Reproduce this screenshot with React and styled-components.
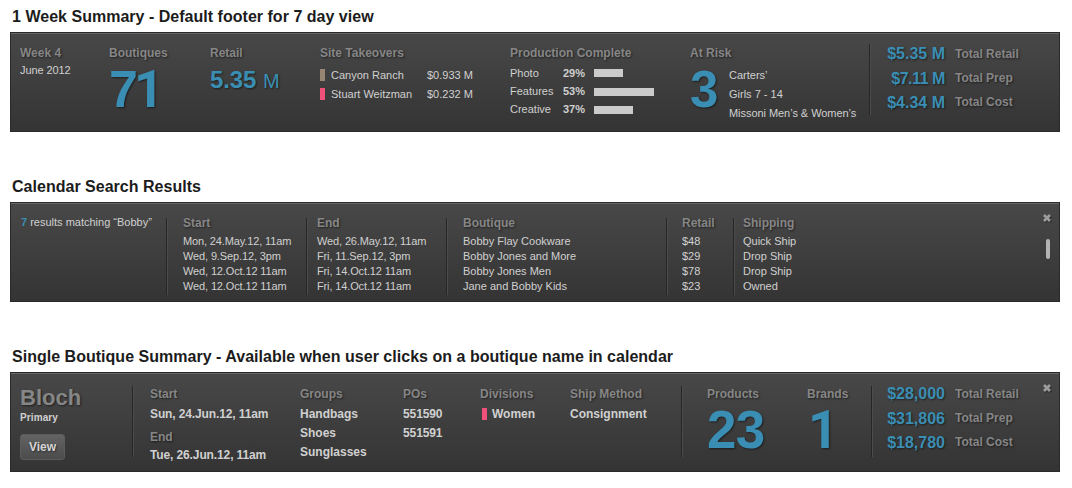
import React from 'react'
import styled, { createGlobalStyle, css } from 'styled-components';

const GlobalStyle = createGlobalStyle`
  body {
    margin: 0;
    background: #fff;
    font-family: "Liberation Sans", Arial, sans-serif;
  }
`

const blue = '#3a8eb3';
const shadow = css`text-shadow: 1px 1px 2px rgba(0, 0, 0, 0.5);`

const Page = styled.main`
  width: 1072px;
  height: 488px;
  overflow: hidden;
`

const Section = styled.section`
  height: 170px;
  padding: 0 12px 0 10px;
`

const Title = styled.h2`
  margin: 0;
  padding: 7px 0 5px 2px;
  font-size: 16px;
  line-height: 20px;
  letter-spacing: 0.02px;
  font-weight: bold;
  color: #1c1c1c;
  white-space: nowrap;
`

const Panel = styled.div`
  display: flex;
  align-items: flex-start;
  box-sizing: border-box;
  width: 1050px;
  height: 100px;
  padding-left: 9px;
  border: 1px solid #2b2929;
  background: linear-gradient(#484848, #343434);
  box-shadow: inset 0 1px 0 #666;
  white-space: nowrap;
`

const Column = styled.div`
  flex: none;
  width: ${p => p.$w}px;
  padding-top: ${p => p.$top ?? 12}px;
`

const Divider = styled.div`
  flex: none;
  width: 1px;
  height: ${p => p.$h || 71}px;
  margin: ${p => p.$top ?? 11}px ${p => p.$gap}px 0 0;
  background: #262626;
  box-shadow: 1px 0 0 #4c4c4c;
`

const Label = styled.div`
  font-size: 12px;
  line-height: 16px;
  font-weight: bold;
  color: #868686;
  ${shadow}
`

const Text = styled.div`
  font-size: ${p => p.$size || 11}px;
  line-height: ${p => p.$lh || 15}px;
  letter-spacing: ${p => p.$ls || 0}px;
  font-weight: ${p => (p.$bold ? 'bold' : 'normal')};
  color: #d0d0d0;
`

const List = styled.div`
  padding-top: ${p => p.$top || 0}px;
`

const Big = styled.div`
  height: ${p => p.$lh}px;
  padding-left: ${p => p.$pad || 0}px;
  font-size: ${p => p.$size}px;
  line-height: ${p => p.$lh}px;
  letter-spacing: ${p => p.$ls || 0}px;
  font-weight: bold;
  color: ${blue};
  ${shadow}
`

// a "1" without the foot serif
const One = styled.span`
  font-family: Roboto, Arial, sans-serif;
`

const Unit = styled.span`
  font-size: 20px;
  font-weight: normal;
`

const Swatch = styled.span`
  flex: none;
  width: 5px;
  height: 12px;
  margin: 0 5px 1px 0;
  background: ${p => p.$color};
`

const Takeover = styled.div`
  display: grid;
  grid-template-columns: 11px 96px auto;
  align-items: center;
  height: 19px;
`

const Bar = styled.span`
  height: 8px;
  background: #cbcbcb;
`

const Stage = styled.div`
  display: grid;
  grid-template-columns: 53px 31px auto;
  align-items: center;
  height: 18px;

  & + & ${Bar} {
    margin-top: 2px;
  }
`

const Risk = styled.div`
  display: flex;
`

const Totals = styled.div`
  display: grid;
  grid-template-columns: 60px auto;
  column-gap: 10px;
  padding-top: 9px;
`

const Amount = styled.div`
  height: 24px;
  font-size: 16px;
  line-height: 24px;
  letter-spacing: ${p => (p.$tight ? -0.45 : 0)}px;
  font-weight: bold;
  text-align: right;
  color: ${blue};
  ${shadow}

  &:nth-of-type(n + 3) {
    line-height: 26px;
  }
`

const TotalLabel = styled(Label)`
  line-height: 24px;
`

const Tagged = styled.div`
  display: flex;
  align-items: center;
  padding-left: 2px;
`

const Matches = styled(Text)`
  padding-left: 1px;

  b {
    color: ${blue};
  }
`

const Rail = styled.div`
  display: flex;
  flex-direction: column;
  align-items: flex-end;
  margin: 10px 6px 0 auto;
`

const Close = styled.button`
  display: block;
  padding: 0;
  border: 0;
  background: none;
  line-height: 0;
`

const Thumb = styled.div`
  width: 4px;
  height: 20px;
  margin: 15px 3px 0 0;
  border-radius: 2px;
  background: #b4b4b4;
`

const Name = styled.div`
  font-size: 22px;
  line-height: 26px;
  font-weight: bold;
  color: #868686;
  ${shadow}
`

const Button = styled.button`
  display: block;
  width: 45px;
  height: 26px;
  margin-top: 9px;
  padding: 0;
  border: 1px solid #5c5c5c;
  border-radius: 3px;
  background: linear-gradient(#636363, #4c4c4c);
  font: bold 12px "Liberation Sans", Arial, sans-serif;
  color: #d6d6d6;
  ${shadow}
`

const takeovers = [
  { name: 'Canyon Ranch', amount: '$0.933 M', color: '#978573' },
  { name: 'Stuart Weitzman', amount: '$0.232 M', color: '#f0517b' },
]

const stages = [
  { name: 'Photo', pct: 29, bar: 29 },
  { name: 'Features', pct: 53, bar: 60 },
  { name: 'Creative', pct: 37, bar: 39 },
]

const results = [
  { title: 'Start', w: 123, gap: 16, ls: -0.13, rows: ['Mon, 24.May.12, 11am', 'Wed, 9.Sep.12, 3pm', 'Wed, 12.Oct.12 11am', 'Wed, 12.Oct.12 11am'] },
  { title: 'End', w: 129, gap: 10, ls: -0.13, rows: ['Wed, 26.May.12, 11am', 'Fri, 11.Sep.12, 3pm', 'Fri, 14.Oct.12 11am', 'Fri, 14.Oct.12 11am'] },
  { title: 'Boutique', w: 203, gap: 16, rows: ['Bobby Flay Cookware', 'Bobby Jones and More', 'Bobby Jones Men', 'Jane and Bobby Kids'] },
  { title: 'Retail', w: 51, gap: 15, rows: ['$48', '$29', '$78', '$23'] },
  { title: 'Shipping', w: 120, gap: 9, rows: ['Quick Ship', 'Drop Ship', 'Drop Ship', 'Owned'] },
]

const CloseButton = () => (
  <Close aria-label="Close">
    <svg width="11" height="11" viewBox="0 0 11 11">
      <path d="M3 3l6 6M9 3l-6 6" stroke="#2a2a2a" strokeWidth="2.8" />
      <path d="M2 2l6 6M8 2l-6 6" stroke="#9c9c9c" strokeWidth="2.8" />
    </svg>
  </Close>
)

const TotalsBlock = ({ amounts }) => (
  <Totals>
    {['Total Retail', 'Total Prep', 'Total Cost'].map((label, i) => (
      <React.Fragment key={label}>
        <Amount $tight={amounts[i].includes('11')}>{amounts[i]}</Amount>
        <TotalLabel>{label}</TotalLabel>
      </React.Fragment>
    ))}
  </Totals>
)

const WeekSummary = () => (
  <Panel>
    <Column $w={89}>
      <Label>Week 4</Label>
      <List $top={2}><Text $ls={-0.1}>June 2012</Text></List>
    </Column>
    <Column $w={101}>
      <Label>Boutiques</Label>
      <Big $size={52} $lh={56} $ls={-4}>7<One>1</One></Big>
    </Column>
    <Column $w={110}>
      <Label>Retail</Label>
      <List $top={5}><Big $size={24} $lh={28} $ls={-0.1}>5.35 <Unit>M</Unit></Big></List>
    </Column>
    <Column $w={190}>
      <Label>Site Takeovers</Label>
      <List $top={5}>
        {takeovers.map(t => (
          <Takeover key={t.name}>
            <Swatch $color={t.color} />
            <Text>{t.name}</Text>
            <Text>{t.amount}</Text>
          </Takeover>
        ))}
      </List>
    </Column>
    <Column $w={180}>
      <Label>Production Complete</Label>
      <List $top={3}>
        {stages.map(s => (
          <Stage key={s.name}>
            <Text>{s.name}</Text>
            <Text $bold>{s.pct}%</Text>
            <Bar style={{ width: s.bar }} />
          </Stage>
        ))}
      </List>
    </Column>
    <Column $w={179}>
      <Label>At Risk</Label>
      <Risk>
        <Column $w={39} $top={0}><Big $size={51} $lh={57}>3</Big></Column>
        <List $top={5}>
          <Text $lh={19}>Carters’</Text>
          <Text $lh={19}>Girls 7 - 14</Text>
          <Text $lh={19} $ls={-0.05}>Missoni Men’s &amp; Women’s</Text>
        </List>
      </Risk>
    </Column>
    <Divider $gap={15} />
    <TotalsBlock amounts={['$5.35 M', '$7.11 M', '$4.34 M']} />
  </Panel>
)

const SearchResults = () => (
  <Panel>
    <Column $w={146}>
      <Matches><b>7</b> results matching “Bobby”</Matches>
    </Column>
    {results.map(c => (
      <React.Fragment key={c.title}>
        <Divider $top={15} $h={77} $gap={c.gap} />
        <Column $w={c.w}>
          <Label>{c.title}</Label>
          <List $top={3}>
            {c.rows.map((r, i) => <Text key={i} $ls={c.ls}>{r}</Text>)}
          </List>
        </Column>
      </React.Fragment>
    ))}
    <Rail>
      <CloseButton />
      <Thumb />
    </Rail>
  </Panel>
)

const BoutiqueSummary = () => (
  <Panel>
    <Column $w={112}>
      <Name>Bloch</Name>
      <Text $bold $size={10} $lh={14} $ls={0.1}>Primary</Text>
      <Button>View</Button>
    </Column>
    <Divider $top={13} $gap={17} />
    <Column $w={150} $top={13}>
      <Label>Start</Label>
      <List $top={3}><Text $bold $size={12} $lh={19} $ls={-0.12}>Sun, 24.Jun.12, 11am</Text></List>
      <List $top={5}><Label>End</Label></List>
      <List $top={1}><Text $bold $size={12} $lh={19} $ls={-0.12}>Tue, 26.Jun.12, 11am</Text></List>
    </Column>
    <Column $w={103} $top={13}>
      <Label>Groups</Label>
      <List $top={3}>
        {['Handbags', 'Shoes', 'Sunglasses'].map(g => <Text key={g} $bold $size={12} $lh={19}>{g}</Text>)}
      </List>
    </Column>
    <Column $w={77} $top={13}>
      <Label>POs</Label>
      <List $top={3}>
        <Text $bold $size={12} $lh={19} $ls={-0.1}>551590</Text>
        <Text $bold $size={12} $lh={19} $ls={-0.1}>551591</Text>
      </List>
    </Column>
    <Column $w={90} $top={13}>
      <Label>Divisions</Label>
      <List $top={3}>
        <Tagged>
          <Swatch $color="#f0517b" />
          <Text $bold $size={12} $lh={19}>Women</Text>
        </Tagged>
      </List>
    </Column>
    <Column $w={111} $top={13}>
      <Label>Ship Method</Label>
      <List $top={3}><Text $bold $size={12} $lh={19}>Consignment</Text></List>
    </Column>
    <Divider $top={13} $gap={25} />
    <Column $w={100} $top={13}>
      <Label>Products</Label>
      <Big $size={53} $lh={55} $ls={-0.8}>23</Big>
    </Column>
    <Column $w={64} $top={13}>
      <Label>Brands</Label>
      <Big as={One} $size={53} $lh={56} $pad={1}>1</Big>
    </Column>
    <Divider $top={13} $gap={13} />
    <TotalsBlock amounts={['$28,000', '$31,806', '$18,780']} />
    <Rail>
      <CloseButton />
    </Rail>
  </Panel>
)

export default function App() {
  return (
    <Page>
      <GlobalStyle />
      <Section>
        <Title>1 Week Summary - Default footer for 7 day view</Title>
        <WeekSummary />
      </Section>
      <Section>
        <Title>Calendar Search Results</Title>
        <SearchResults />
      </Section>
      <Section>
        <Title>Single Boutique Summary - Available when user clicks on a boutique name in calendar</Title>
        <BoutiqueSummary />
      </Section>
    </Page>
  );
}
